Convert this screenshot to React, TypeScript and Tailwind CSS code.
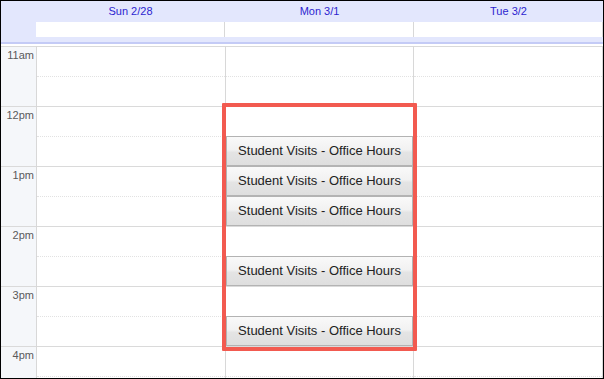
import React from 'react'

const days = ['Sun 2/28', 'Mon 3/1', 'Tue 3/2']
const hours = ['11am', '12pm', '1pm', '2pm', '3pm', '4pm']
// minutes after 11am
const visits = [90, 120, 150, 210, 270]

function EventButton({ top }: { top: number }) {
  return (
    <div
      className="absolute left-0 right-0 h-[30px] flex items-center justify-center border border-[#b3b3b3] bg-[linear-gradient(to_bottom,#f9f9f9_0%,#f2f2f2_45%,#e4e4e4_55%,#dedede_100%)] text-[13px] text-[#222]"
      style={{ top }}
    >
      Student Visits - Office Hours
    </div>
  )
}

export default function App() {
  return (
    <div className="relative w-[604px] h-[379px] overflow-hidden border border-black bg-white font-['Liberation_Sans',Arial,sans-serif]">
      {/* Header */}
      <div className="flex h-[43px] bg-[#e3e7fd] border-b-2 border-[#c4cbf6]">
        <div className="w-[35px] shrink-0" />
        {days.map(d => (
          <div key={d} className="flex-1 flex flex-col">
            <div className="h-[21px] flex items-center justify-center text-[11px] text-[#2d1fd0]">{d}</div>
            <div className="h-[15px] bg-white border-r border-[#d8d8d8]" />
          </div>
        ))}
      </div>

      {/* Body */}
      <div className="flex pt-[2px]">
        <div className="w-[36px] shrink-0 bg-[#f5f7fa] border-r border-[#d8d8d8]">
          {hours.map(h => (
            <div key={h} className="h-[60px] border-t border-[#dadada] text-right pr-[2px] pt-[2px] text-[11px] leading-[13px] text-[#5a5a5a]">
              {h}
            </div>
          ))}
        </div>
        {days.map((d, i) => (
          <div key={d} className="relative flex-1 border-r border-[#d8d8d8]">
            {hours.map(h => (
              <div key={h} className="h-[60px] border-t border-[#dadada]">
                <div className="h-[30px] border-b border-dotted border-[#e2e2e2]" />
              </div>
            ))}
            {i === 1 && visits.map(m => <EventButton key={m} top={m} />)}
          </div>
        ))}
      </div>

      {/* highlight */}
      <div className="absolute left-[221px] top-[102px] w-[195px] h-[248px] border-4 border-[#f25a50] rounded-[1px]" />
    </div>
  )
}
